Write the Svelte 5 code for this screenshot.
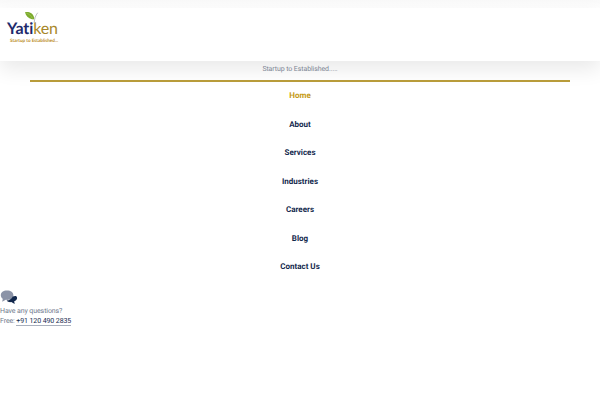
<script>
  const links = ["Home", "About", "Services", "Industries", "Careers", "Blog", "Contact Us"];
</script>

<div class="page">
  <header class="header">
    <a class="logo" href="#top">
      <svg class="leaf" width="16" height="14" viewBox="0 0 18 16" aria-hidden="true">
        <path d="M1 1.500C5 .5 10 2 11.500 7.500 12 9.500 11 10 9 9.500 4.500 8.500 2 5.500 1 1.500Z" fill="#7cab2e" />
        <path d="M2.500 2.500C5 3 8 5 9.500 8.500" fill="none" stroke="#a9cc5c" stroke-width=".7" />
        <path d="M11.500 13.500C11.800 9 13 5 15.500 2" fill="none" stroke="#b9bcc0" stroke-width="1.100" />
      </svg>
      <span class="wordmark"><span class="navy">Yati</span><span class="gold">ken</span></span>
      <span class="slogan">Startup to Established...</span>
    </a>
  </header>

  <p class="tagline">Startup to Established.....</p>

  <nav class="nav">
    {#each links as link, index}
      <a href="#top" class:active={index === 0}>{link}</a>
    {/each}
  </nav>

  <div class="contact">
    <svg class="chat" width="18" height="15" viewBox="0 0 18 15" aria-hidden="true">
      <path d="M7 .5C3.200.5.800 2.500.800 5.200c0 1.500.8 2.800 2 3.600L2.200 11.800 5.800 9.800c.4 0 .8.100 1.200.100 3.800 0 6.400-2 6.400-4.700S10.800.5 7 .5Z" fill="#8b93a7" />
      <path d="M12.800 6.500c-1 2.300-3.300 3.800-6.200 4.100.8 1 2.100 1.600 3.700 1.600.3 0 .7 0 1-.1l3.400 2-.5-2.900c1.700-.6 2.900-1.800 2.900-3.200 0-.8-.4-1.500-1-2-.9-.2-2.300-.1-3.300.5Z" fill="#12284c" />
    </svg>
    <p>Have any questions?</p>
    <p>Free: <a href="#top">+91 120 490 2835</a></p>
  </div>
</div>

<style>
  :global(body) {
    background: #fff;
    font-family: "Roboto", "Noto Sans", sans-serif;
    text-rendering: geometricPrecision;
  }

  .page {
    height: 400px;
    overflow: hidden;
    padding-top: 8px;
    box-sizing: border-box;
    background: linear-gradient(#f9f9f9, #fff 8px);
  }

  .header {
    height: 53px;
    background: #fff;
    box-shadow: 0 8px 20px rgba(0, 0, 0, 0.09);
  }

  .logo {
    position: relative;
    display: flex;
    flex-direction: column;
    width: 60px;
    margin-left: 7px;
    padding-top: 13px;
    text-decoration: none;
    font-family: "Lato", sans-serif;
  }

  .leaf {
    position: absolute;
    left: 17px;
    top: 3px;
  }

  .wordmark {
    font-size: 16px;
    line-height: 16px;
    font-weight: 700;
    letter-spacing: -0.1px;
  }

  .navy {
    color: #1f2a6b;
  }

  .gold {
    color: #a8872a;
    font-weight: 400;
  }

  .slogan {
    margin-left: 3px;
    font-size: 4.600px;
    line-height: 6px;
    font-weight: 700;
    color: #b98a1e;
    white-space: nowrap;
  }

  .tagline {
    margin: 0;
    padding-top: 3px;
    height: 16px;
    line-height: 11px;
    font-size: 7px;
    letter-spacing: -0.1px;
    text-align: center;
    color: #7d8694;
  }

  .nav {
    display: flex;
    flex-direction: column;
    align-items: center;
    margin: 0 30px;
    border-top: 2px solid #b89b3a;
  }

  .nav a {
    height: 28.500px;
    line-height: 27px;
    font-size: 8px;
    font-weight: 700;
    color: #12284c;
    text-decoration: none;
  }

  .nav a.active {
    color: #c59a13;
  }

  .contact {
    padding-top: 8px;
    font-size: 7px;
    letter-spacing: -0.1px;
    line-height: 10px;
    color: #6f7a8c;
  }

  .contact p {
    margin: 0;
  }

  .chat {
    display: block;
    margin-bottom: 1px;
  }

  .contact a {
    color: #12284c;
    text-decoration: none;
    border-bottom: 1px solid #a9b0bd;
  }
</style>
